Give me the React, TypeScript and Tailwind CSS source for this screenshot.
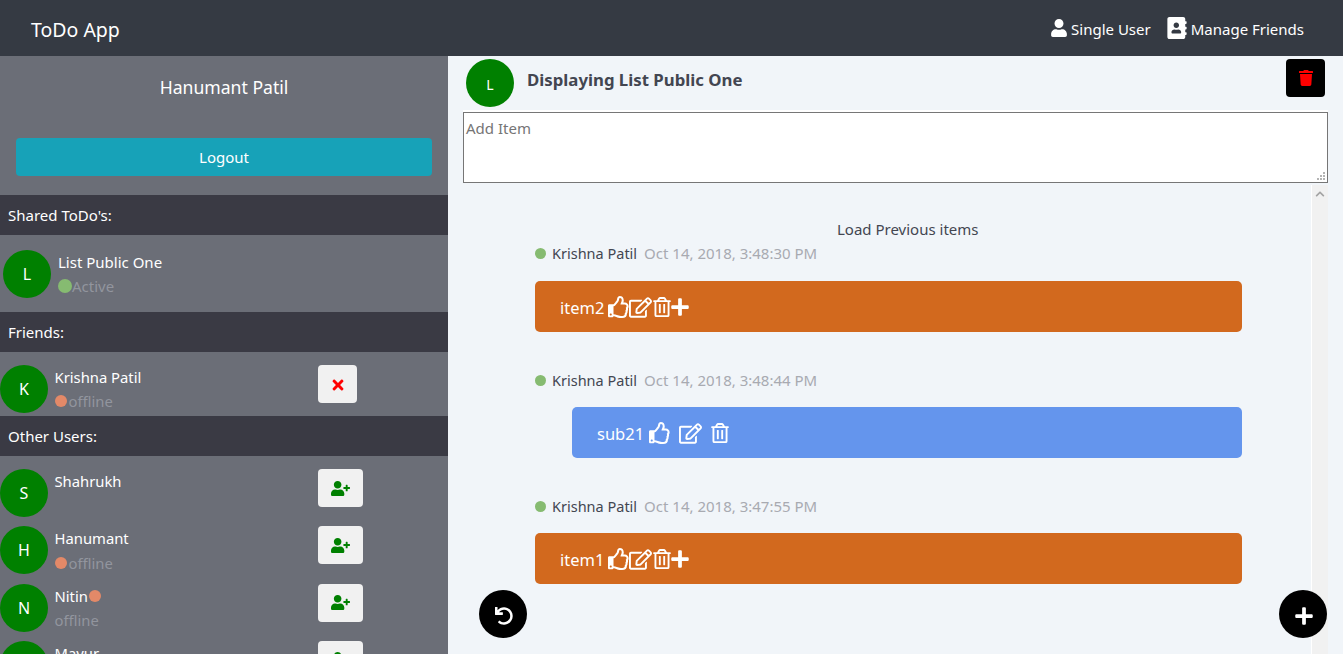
import React from 'react';
import { FaUser, FaAddressBook, FaTrash, FaTimes, FaUserPlus, FaRegThumbsUp, FaRegEdit, FaRegTrashAlt, FaPlus, FaUndo, FaChevronUp } from 'react-icons/fa';

const Avatar = ({ letter, small }: { letter: string; small?: boolean }) => (
  <div className={`w-12 h-12 shrink-0 rounded-full bg-[#008000] flex items-center justify-center text-white ${small ? 'text-[14px] pt-[3px]' : 'text-[16px]'}`}>{letter}</div>
);

const Dot = ({ color }: { color: string }) => <span className={`inline-block rounded-full ${color}`} />;

const SectionTitle = ({ children }: { children: React.ReactNode }) => (
  <div className="h-10 bg-[#3a3a44] text-white text-[15px] flex items-center pl-2 pt-[1px]">{children}</div>
);

const UserRow = ({ letter, name, status, dotAfterName }: { letter: string; name: string; status?: string; dotAfterName?: boolean }) => (
  <div className="flex h-[57.33px]">
    <Avatar letter={letter} />
    <div className="w-[270px] pl-[6.5px] text-[14.8px] leading-[24px]">
      <div className="flex items-center text-white h-6">{name}{dotAfterName && <Dot color="w-[12px] h-[12px] bg-[#e38968] ml-[1px]" />}</div>
      {status && (
        <div className={`flex items-center gap-[2px] text-[#92959e] h-6 ${dotAfterName ? '' : 'mt-[1px]'}`}>
          {!dotAfterName && <Dot color="w-[12px] h-[12px] bg-[#e38968]" />}{status}
        </div>
      )}
    </div>
    <button className="w-[45px] h-[38px] rounded bg-[#f1f1f1] flex items-center justify-center text-[#008000]">
      <FaUserPlus className="text-[19px]" />
    </button>
  </div>
);

const Meta = ({ time }: { time: string }) => (
  <div className="flex items-center h-6 ml-[72px] text-[15px]">
    <Dot color="w-[11px] h-[11px] bg-[#86bb71] mr-[6px]" />
    <span className="text-[#434651] text-[14.5px] pt-[1px]">Krishna Patil</span>
    <span className="text-[#a8aab1] ml-[7px] pt-[1px]">{time}</span>
  </div>
);

const ItemBubble = ({ label, top }: { label: string; top: string }) => (
  <div className={`${top} ml-[72px] w-[707px] h-[51px] rounded-[5px] bg-[#d2691e] text-white text-[16.5px] flex items-center pl-[25px] pt-[1px]`}>
    <span className="mr-[4px] pt-[2px]">{label}</span>
    <FaRegThumbsUp className="text-[22px]" />
    <FaRegEdit className="text-[23px] -ml-[1px]" />
    <FaRegTrashAlt className="text-[20px]" />
    <FaPlus className="text-[20px] -ml-[2px]" />
  </div>
);

export default function App() {
  return (
    <div className="h-screen overflow-hidden flex flex-col bg-[#f1f5f9] font-['Noto_Sans',sans-serif]">
      <nav className="h-14 shrink-0 bg-[#353a43] flex items-center justify-between pl-[31px] pr-[39px] text-white">
        <div className="text-[19.5px] pt-[3px]">ToDo App</div>
        <div className="flex items-center gap-[15px] text-[15px] pt-[2px]">
          <div className="flex items-center gap-[3px]"><FaUser className="text-[18px] -mt-[2px]" />Single User</div>
          <div className="flex items-center gap-[3px]"><FaAddressBook className="text-[22px] -mt-[2px]" />Manage Friends</div>
        </div>
      </nav>

      <div className="flex flex-1 min-h-0">
        <aside className="w-[448px] shrink-0 bg-[#6b6e77] overflow-hidden">
          <div className="h-[139px] px-4 pt-[18px]">
            <div className="text-center text-white text-[17.6px] leading-[26px]">Hanumant Patil</div>
            <button className="mt-[38px] w-full h-[38px] rounded bg-[#17a2b8] text-white text-[15px]">Logout</button>
          </div>

          <SectionTitle>Shared ToDo's:</SectionTitle>
          <div className="h-[77px] flex pl-[3px] pt-[15px]">
            <Avatar letter="L" />
            <div className="pl-[7px] text-[15px] leading-[24px]">
              <div className="text-white">List Public One</div>
              <div className="flex items-center text-[#92959e]"><Dot color="bg-[#86bb71] w-[14px] h-[14px]" />Active</div>
            </div>
          </div>

          <SectionTitle>Friends:</SectionTitle>
          <div className="h-16 flex pt-[13px]">
            <Avatar letter="K" />
            <div className="w-[270px] pl-[6.5px] text-[14.8px] leading-[24px]">
              <div className="text-white">Krishna Patil</div>
              <div className="flex items-center gap-[2px] text-[#92959e]"><Dot color="w-[12px] h-[12px] bg-[#e38968]" />offline</div>
            </div>
            <button className="w-[39px] h-[38px] rounded bg-[#f1f1f1] flex items-center justify-center text-[#ff0000]">
              <FaTimes className="text-[16px] mt-[1px]" />
            </button>
          </div>

          <SectionTitle>Other Users:</SectionTitle>
          <div className="pt-[13px]">
            <UserRow letter="S" name="Shahrukh" />
            <UserRow letter="H" name="Hanumant" status="offline" />
            <UserRow letter="N" name="Nitin" status="offline" dotAfterName />
            <UserRow letter="M" name="Mayur" />
          </div>
        </aside>

        <main className="flex-1 min-w-0 flex flex-col relative">
          <div className="h-[54px] shrink-0 flex items-start pl-[18px] pr-[18px] pt-[3px]">
            <Avatar letter="L" small />
            <div className="ml-[13px] mt-[9px] text-[16.8px] font-bold text-[#434651] leading-[24px]">Displaying List Public One</div>
            <button className="ml-auto w-[39px] h-[38px] rounded bg-black flex items-center justify-center text-[#ff0000]">
              <FaTrash className="text-[16px]" />
            </button>
          </div>
          <div className="h-[2px] bg-white ml-[15px] mr-[15px] shrink-0" />
          <div className="relative ml-[15px] w-[865px] h-[71px] shrink-0">
            <textarea
              placeholder="Add Item"
              className="block w-full h-full border border-[#767676] bg-white px-[2px] pt-[3px] text-[15px] leading-[24px] outline-none placeholder:text-[#757575] resize-none"
            />
            <svg className="absolute right-[3px] bottom-[3px]" width="8" height="8" viewBox="0 0 8 8" fill="#b4b4b4">
              <rect x="6" y="0" width="2" height="2" />
              <rect x="3" y="3" width="2" height="2" />
              <rect x="6" y="3" width="2" height="2" />
              <rect x="0" y="6" width="2" height="2" />
              <rect x="3" y="6" width="2" height="2" />
              <rect x="6" y="6" width="2" height="2" />
            </svg>
          </div>
          <div className="flex flex-1 min-h-0 mt-[2px] ml-[15px] mr-[15px]">
            <div className="flex-1 min-w-0 overflow-hidden">
              <div className="pt-[33px] pl-[374px] h-[56px] text-[15px] text-[#434651]">Load Previous items</div>
              <Meta time="Oct 14, 2018, 3:48:30 PM" />
              <ItemBubble label="item2" top="mt-[16px]" />
              <div className="mt-[36px]"><Meta time="Oct 14, 2018, 3:48:44 PM" /></div>
              <div className="mt-[15px] ml-[109px] w-[670px] h-[51px] rounded-[5px] bg-[#6495ed] text-white text-[16.5px] flex items-center pl-[25px] pt-[1px]">
                <span className="mr-[5px] pt-[2px]">sub21</span>
                <FaRegThumbsUp className="text-[22px]" />
                <FaRegEdit className="text-[23px] ml-[8px]" />
                <FaRegTrashAlt className="text-[20px] ml-[8px]" />
              </div>
              <div className="mt-[36px]"><Meta time="Oct 14, 2018, 3:47:55 PM" /></div>
              <ItemBubble label="item1" top="mt-[15px]" />
            </div>
            <div className="w-[17px] shrink-0 bg-[#f1f1f1] border-l border-white flex justify-center pt-[4px]">
              <FaChevronUp className="text-[10px] text-[#a3a3a3]" />
            </div>
          </div>

          <button className="absolute left-[31px] top-[534px] w-12 h-12 rounded-full bg-black flex items-center justify-center text-white">
            <FaUndo className="text-[18px] mt-[3px] ml-[2px]" />
          </button>
          <button className="absolute left-[831px] top-[534px] w-12 h-12 rounded-full bg-black flex items-center justify-center text-white">
            <FaPlus className="text-[20px] mt-[3px] ml-[2px]" />
          </button>
        </main>
      </div>
    </div>
  );
}
